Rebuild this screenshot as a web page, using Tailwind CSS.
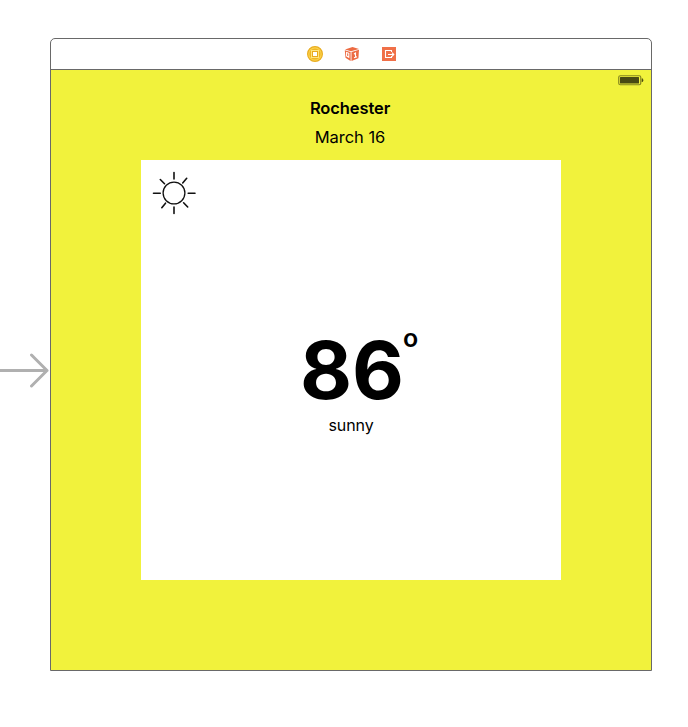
<!DOCTYPE html>
<html lang="en">
<head>
<meta charset="utf-8">
<title>Weather storyboard</title>
<script src="https://cdn.jsdelivr.net/npm/@tailwindcss/browser@4"></script>
</head>
<body class="relative h-[727px] w-[688px] overflow-hidden bg-white pt-[38px] pl-[50px] text-black font-['Inter','Liberation_Sans',sans-serif]">
<!-- Initial scene arrow -->
<svg class="absolute left-0 top-[350px]" width="50" height="40" fill="none" stroke="#b0b0b0" stroke-width="3" stroke-linecap="round" stroke-linejoin="round"><path d="M0 20.5H47M31.5 5L47 20.5L31.5 36"/></svg>
<main class="flex h-[633px] w-[602px] flex-col overflow-hidden rounded-t-[5px] border border-[#696969] bg-white">
  <!-- Scene dock -->
  <header class="flex h-[31px] shrink-0 items-center justify-center gap-[21px] border-b border-[#696969] pl-[2px]">
    <svg width="16" height="16" viewBox="0 0 16 16" fill="none"><circle cx="8" cy="8" r="7.4" fill="#fcd34b" stroke="#e9ad22" stroke-width="1.2"/><circle cx="8" cy="8" r="5.6" fill="#efb526"/><rect x="4" y="4" width="8" height="8" fill="#ffe680"/><rect x="5.5" y="5.5" width="5" height="5" fill="#fff" stroke="#e9aa1e"/></svg>
    <svg width="16" height="16" viewBox="0 0 16 16"><path d="M1 3.5L8.5 1L15 3L7 5.3Z" fill="#ed6b42"/><path d="M.8 4.3L6.6 6V15L1.5 11.8Z" fill="#ed6b42"/><path d="M7.5 6L15 3.8L14.4 12.2L7.5 15Z" fill="#ed6b42"/><path d="M2.6 6.6V10L4.8 11.3V7.3ZM10 8L11.5 7V11.2M10 11.8L13 10.7" fill="none" stroke="#fff" stroke-width="1.1"/></svg>
    <svg width="16" height="16" viewBox="0 0 16 16" fill="none"><rect x="1" y="1" width="14" height="14" fill="#f07048"/><path d="M10.5 6V4.5H4.5V11.5H10.5V10M7 8.5H12.5M11 6.7L12.8 8.5L11 10.3" stroke="#fff" stroke-width="1.1"/></svg>
  </header>
  <section class="relative flex h-[600px] flex-col items-center bg-[#f1f23c]">
    <svg class="absolute left-[567px] top-[5px]" width="26" height="11" fill="none"><rect x=".75" y=".75" width="22" height="9" rx="1.5" stroke="#85861f" stroke-width="1.2"/><rect x="2" y="2" width="19" height="6.5" rx=".5" fill="#494a13"/><path d="M24 3.5Q25 4 25 5.2T24 7Z" fill="#494a13" stroke="#494a13" stroke-width=".6"/></svg>
    <h1 class="mt-[28px] h-[20px] translate-x-[-1px] text-[16.5px] leading-[20px] font-semibold tracking-[-0.1px]">Rochester</h1>
    <p class="mt-[9px] h-[20px] translate-x-[-1px] text-[16.5px] leading-[20px] tracking-[-0.05px]">March 16</p>
    <article class="relative mt-[13px] flex h-[420px] w-[420px] flex-col items-center bg-white">
      <svg class="absolute left-[11px] top-[11px]" width="45" height="45" viewBox="0 0 45 45" fill="none" stroke="#111" stroke-width="1.6" stroke-linecap="round"><circle cx="22" cy="22" r="10.9" stroke-width="1.3"/><path d="M22 1.5V8M22 36V42.5M1.5 22.3H8.3M36.2 22.3H43M8.3 8.5L12.5 12.7M34.7 7.3L30.7 12M9.8 36.7L13.5 32.2M31.6 31.8L35.7 36"/></svg>
      <div class="relative left-[1px] mt-[181px] h-[61px] text-[80px] leading-[58px] font-bold">86<span class="absolute left-full top-[-15px] ml-[-1px] text-[25px] leading-[24px] font-semibold">o</span></div>
      <p class="mt-[13px] text-[16px] leading-[20px] tracking-[-0.1px]">sunny</p>
    </article>
  </section>
</main>
</body>
</html>
